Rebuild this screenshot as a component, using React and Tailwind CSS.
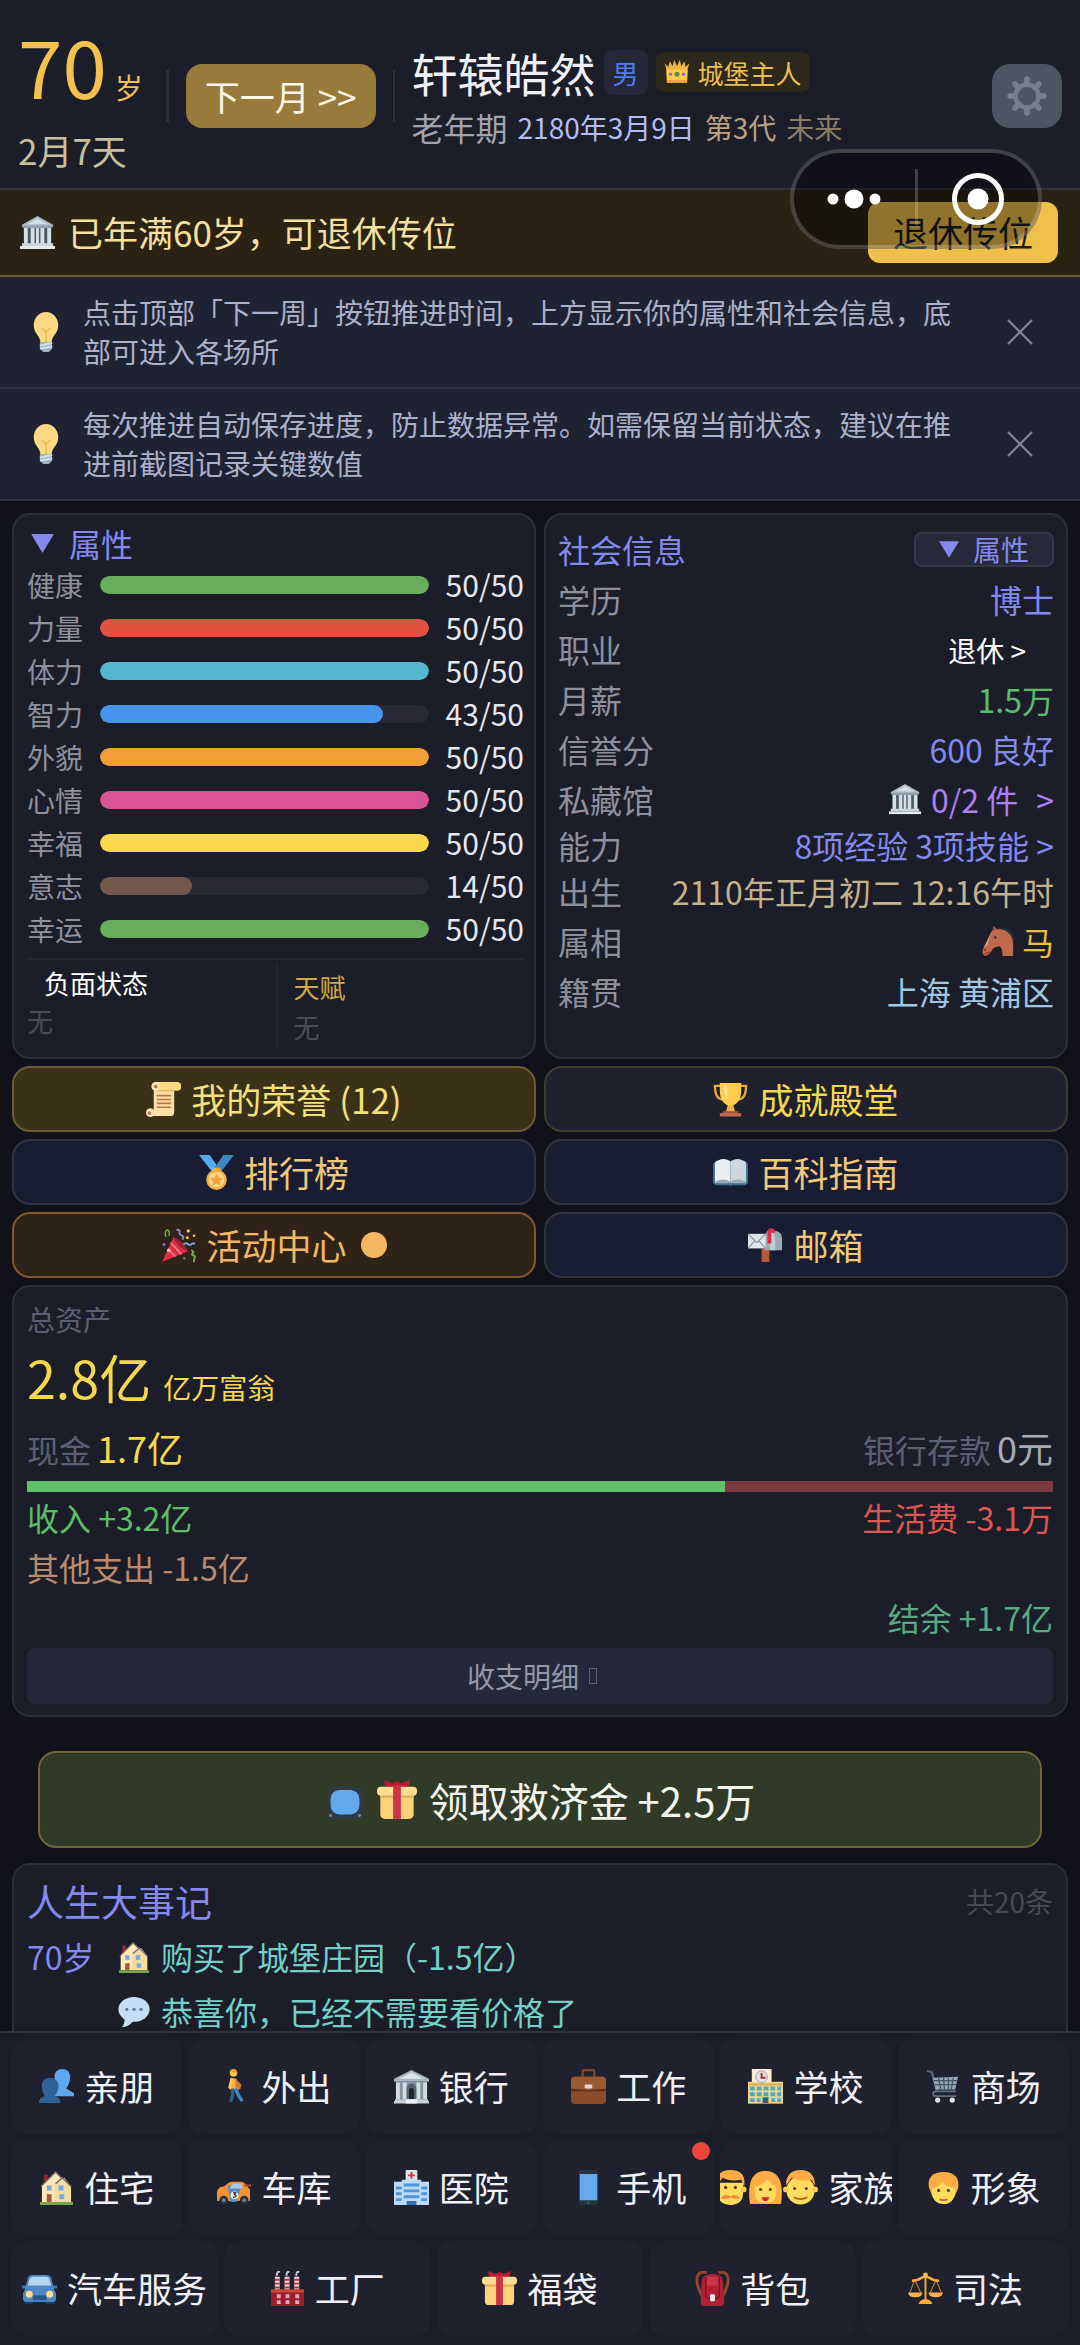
import { useState } from "react";

const icons = {
  museum: (
    <>
      <path d="M2 10 18 1l16 9v2H2z" fill="#a9b9c6" />
      <path d="M7 9.500 18 3.500l11 6z" fill="#d3dde5" />
      <path d="M4 12h28v19H4z" fill="#475866" />
      <path d="M4 12h4v18H4zM11 12h4v18h-4zM21 12h4v18h-4zM28 12h4v18h-4zM16.500 12h3v18h-3z" fill="#d5dfe6" />
      <path d="M3 11h30v2.500H3z" fill="#8fa0ae" />
      <path d="M2 29h32v3H2z" fill="#ccd6dd" />
      <path d="M0 32h36v3H0z" fill="#e4ebef" />
    </>
  ),
  bank: (
    <>
      <path d="M0 10 18 1l18 9v3H0z" fill="#a9b7c1" />
      <path d="M5 10 18 3.500 31 10z" fill="#dce4e9" />
      <path d="M2 13h32v18H2z" fill="#8495a1" />
      <path d="M2 14h4v17H2zM9 14h4v17H9zM23 14h4v17h-4zM30 14h4v17h-4z" fill="#d3dce2" />
      <path d="M13 31V20a5 5 0 0 1 10 0v11z" fill="#55646f" />
      <path d="M15.500 31V22a2.500 2.500 0 0 1 5 0v9z" fill="#1d252c" />
      <path d="M1 31h34v2H1zM0 33h36v2.500H0z" fill="#c6d1d8" />
      <path d="M12 31h12v4.500H12z" fill="#eef2f5" />
    </>
  ),
  crown: (
    <>
      <path d="M3 13 1 6l5 5 2-8 4 7 2-9 4 9 4-9 2 9 4-7 2 8 5-5-2 7-1 20H4z" fill="#f4b643" />
      <path d="M4 15h28v14H4z" fill="#ffcc4d" />
      <path d="M4 29h28v4H4z" fill="#f4a33a" />
      <circle cx="18" cy="21" r="3.500" fill="#5c913b" />
      <circle cx="9" cy="21" r="2.300" fill="#9266cc" />
      <circle cx="27" cy="21" r="2.300" fill="#9266cc" />
    </>
  ),
  bulb: (
    <>
      <path d="M29 12c0 8-6 9-6 16H13c0-7-6-8-6-16C7 5 12 0 18 0s11 5 11 12z" fill="#ffd983" />
      <path d="m14 14 4 4 4-4M18 18v9" fill="none" stroke="#f3bd56" strokeWidth="1.500" />
      <path d="M12.500 27h11v6l-3 3h-5l-3-3z" fill="#9fb2bf" />
      <path d="m12.500 30 11-2M12.500 33l11-2" stroke="#dce5eb" strokeWidth="1.500" />
    </>
  ),
  horse: (
    <>
      <path d="M16 4c10-3 20 2 20 13v9c-5-9-8-15-18-17z" fill="#292f33" />
      <path d="M12 6 13 1l4 4c11-1 18 7 18 17v13H23c0-7-1-9-3-11-4 1-7 1-9 5-3 4-6 7-9 5-2-2-2-5 0-9l6-12c1-3 2-5 4-7z" fill="#c1694f" />
      <path d="m12 6 1-5 3 5z" fill="#9a4b36" />
      <path d="M2 25 10 10l-4 13z" fill="#dd9b86" />
      <circle cx="15" cy="14" r="1.400" fill="#292f33" />
      <circle cx="3.500" cy="28" r="1" fill="#57251a" />
      <path d="m3 33 6-3" stroke="#7a3d2c" strokeWidth="1.200" />
    </>
  ),
  scroll: (
    <>
      <path d="M8 5h21v26a4 4 0 0 1-4 4H4l4-5z" fill="#ffe0a3" />
      <path d="M9 0h23a4 4 0 0 1 0 9H9z" fill="#ffd983" />
      <circle cx="10" cy="4.500" r="4.500" fill="#ffe8b6" />
      <circle cx="10" cy="4.500" r="2" fill="#c1805c" />
      <circle cx="4.500" cy="31.500" r="4.500" fill="#ffe8b6" />
      <circle cx="3.500" cy="32" r="2" fill="#c1805c" />
      <path d="M12 9h18" stroke="#d9a760" />
      <path d="M11 14h15M11 18h15M11 22h15M11 26h15" stroke="#b5744f" strokeWidth="1.600" />
    </>
  ),
  trophy: (
    <>
      <path d="M9 4H2c0 8 2 14 9 14M27 4h7c0 8-2 14-9 14" fill="none" stroke="#e5a83e" strokeWidth="2.400" />
      <path d="M7 1h22v8c0 9-4 13-8 15v5h-6v-5C11 22 7 18 7 9z" fill="#ffcc4d" />
      <path d="M11 3h4v15c-3-3-4-7-4-11z" fill="#ffe08a" />
      <path d="M15 25h6l2 6H13z" fill="#f0b340" />
      <path d="M10 30h16v3H10z" fill="#a6523c" />
      <path d="M7 32h22v3.500H7z" fill="#bd6a4f" />
    </>
  ),
  medal: (
    <>
      <path d="M0 0h11l9 13-6 5z" fill="#55acee" />
      <path d="M36 0H25l-9 13 6 5z" fill="#3b88c3" />
      <path d="M14 13h8v4h-8z" fill="#ffac33" />
      <circle cx="18" cy="25.500" r="10.500" fill="#f4ae47" />
      <circle cx="18" cy="25.500" r="8" fill="#ffd983" />
      <path d="m18 19 2 4.500 5 .5-3.700 3.300 1 4.700-4.300-2.500-4.300 2.500 1-4.700L11 24l5-.5z" fill="#f4a23b" />
    </>
  ),
  book: (
    <>
      <path d="M0 9 3 6h30l3 3v20l-3 2H20l-2 1-2-1H3l-3-2z" fill="#3f6d92" />
      <path d="M2 8c5-5 12-5 16-1v21c-5-4-11-3-16 0z" fill="#e8eef2" />
      <path d="M34 8c-5-5-12-5-16-1v21c5-4 11-3 16 0z" fill="#ccd6dd" />
      <path d="M2 28c5-3 11-4 16 0 5-4 11-3 16 0v1H2z" fill="#99aab5" />
      <path d="M18 7v21" stroke="#a7b6c0" />
    </>
  ),
  party: (
    <>
      <path d="M13 9 28 24 1 35z" fill="#dd2e44" />
      <path d="M13 9c5 2 12 8 15 15-6-1-14-8-15-15z" fill="#9e2236" />
      <path d="m7 22 8 7M10 15l11 12" stroke="#ea7180" strokeWidth="2" />
      <path d="M5 9c-3-9 6-9 3-1" fill="none" stroke="#77b255" strokeWidth="1.500" />
      <path d="M16 2c6-1 1 4 4 5s4 2 2 5" fill="none" stroke="#9d7fda" strokeWidth="2" />
      <path d="M23 17c4-4 5 2 8 0 2-2 3-1 4-1" fill="none" stroke="#7ea5e8" strokeWidth="2" />
      <path d="M31 23c6 2-2 4 2 5s0 4 1 7" fill="none" stroke="#77b255" strokeWidth="2" />
      <circle cx="28" cy="3" r="1.700" fill="#ffcc4d" />
      <circle cx="34" cy="8" r="1.300" fill="#ffcc4d" />
      <circle cx="27" cy="10" r="1.500" fill="#ffcc4d" />
      <circle cx="3" cy="17" r="1.500" fill="#8475d8" />
      <circle cx="24" cy="31" r="1.300" fill="#5c913b" />
      <circle cx="8" cy="23" r="1.800" fill="#f6c2ca" />
    </>
  ),
  mailbox: (
    <>
      <path d="M14 21h8v14h-8z" fill="#b5593b" />
      <path d="M20 3h8a7 7 0 0 1 7 7v13H17V8z" fill="#99aab5" />
      <path d="M20 3c5 0 8 3 8 8v12h-5z" fill="#c2ced6" />
      <path d="M0 6h18v15H0z" fill="#dfe6eb" />
      <path d="m0 6 9 9 9-9M0 21l7-8M18 21l-7-8" fill="none" stroke="#8596a2" strokeWidth="1.200" />
      <path d="M20 16V4c0-5 8-5 8 0v1h-4v11z" fill="#dd2e44" />
    </>
  ),
  tv: (
    <>
      <path d="m12 0 6 7 6-7" fill="none" stroke="#30373b" strokeWidth="1.600" />
      <rect x="2" y="6" width="32" height="29" rx="4" fill="#2e3942" />
      <rect x="5" y="9" width="26" height="22" rx="8" fill="#65a9ed" />
      <circle cx="5" cy="32" r="1.300" fill="#7d8d98" />
      <circle cx="31" cy="32" r="1.300" fill="#7d8d98" />
    </>
  ),
  gift: (
    <>
      <path d="M17 7C10 8 5 5 7 0l7 3 4-2 4 2 7-3c2 5-3 8-10 7z" fill="#be1931" />
      <path d="M3 13h30v18a4 4 0 0 1-4 4H7a4 4 0 0 1-4-4z" fill="#fdd279" />
      <path d="M3 13h30v3H3z" fill="#e2ac54" />
      <rect y="6" width="36" height="8" rx="3.500" fill="#ffdd91" />
      <path d="M14.500 5h7v30h-7z" fill="#cf3249" />
    </>
  ),
  house: (
    <>
      <path d="M5 5h4v10H5z" fill="#8c2b30" />
      <path d="m3 16 14-14 8 8 7 6v17H3z" fill="#ffe8b6" />
      <path d="M16 15 26 8l7 9v16H16z" fill="#f7dca0" />
      <path d="m2 17 15-15 7 7M17 14l7-6 9 9" fill="none" stroke="#77696b" strokeWidth="1.500" />
      <path d="M8 16h5v5H8zM20 16h5v5h-5zM21 25h5v5h-5z" fill="#6aafe8" />
      <path d="M8 25h5v8H8z" fill="#a4583d" />
      <path d="M1 33h34v3H1z" fill="#77a54c" />
    </>
  ),
  speech: (
    <>
      <ellipse cx="18" cy="15" rx="17.500" ry="14" fill="#c4def5" />
      <path d="M7 23c1 5 0 10-3 12 7 0 12-4 15-9z" fill="#c4def5" />
      <circle cx="10" cy="15" r="1.800" fill="#5d788f" />
      <circle cx="18" cy="15" r="1.800" fill="#5d788f" />
      <circle cx="26" cy="15" r="1.800" fill="#5d788f" />
    </>
  ),
  busts: (
    <>
      <path d="M16 8c0-5 3-8 8-8s8 3 8 8c0 6-2 9-4 12l8 5v3H15V18c-2-2 1-5 1-10z" fill="#5ea6ee" />
      <path d="M3 17c0-5 3-8 8-8s9 3 9 8c0 6-2 8-4 11 4 1 6 3 6 7H0c0-4 2-6 6-7-2-3-3-6-3-11z" fill="#2e6298" />
    </>
  ),
  walker: (
    <>
      <circle cx="18" cy="4" r="3.800" fill="#ffca4b" />
      <path d="M14 3c1-4 8-4 8 1z" fill="#f0a326" />
      <path d="m15 9 6 1 3 11h-9z" fill="#ffb14a" />
      <path d="m20 10 6 6-1 5-5-2z" fill="#d9782d" />
      <path d="m16 10-2 9 4 3" fill="none" stroke="#ffcc4d" strokeWidth="2.500" />
      <path d="M17 20v7l-2 7" fill="none" stroke="#2b608f" strokeWidth="3.500" />
      <path d="m20 20 3 7 4 6" fill="none" stroke="#4286c3" strokeWidth="3.500" />
    </>
  ),
  briefcase: (
    <>
      <path d="M12 8V3q0-2 2-2h8q2 0 2 2v5" fill="none" stroke="#7c4a2c" strokeWidth="2.500" />
      <rect y="8" width="36" height="28" rx="4" fill="#8b4c2a" />
      <path d="M0 20h36v3H0z" fill="#612d1a" />
      <path d="M0 12a4 4 0 0 1 4-4h28a4 4 0 0 1 4 4v8q-18 3-36 0z" fill="#9c5a30" />
      <rect x="14" y="16" width="8" height="4" rx="1.500" fill="#d7dde0" />
    </>
  ),
  school: (
    <>
      <path d="M4 0h20v20H4z" fill="#fbe6bc" />
      <path d="M0 13h36v22H0z" fill="#f3d688" />
      <path d="M4 0h20v13H4z" fill="#ffeed0" />
      <path d="M1 15h34v2H1z" fill="#d8ad56" />
      <path d="M2 18h5v4H2zM9 18h5v4H9zM16 18h5v4h-5zM23 18h5v4h-5zM30 18h4v4h-4zM2 24h5v4H2zM9 24h5v4H9zM16 24h5v4h-5zM23 24h5v4h-5zM30 24h4v4h-4zM2 30h5v4H2zM9 30h4v4H9zM24 30h4v4h-4zM30 30h4v4h-4z" fill="#57a8c7" />
      <path d="M15 29h6v7h-6z" fill="#286287" />
      <circle cx="14" cy="8" r="6" fill="#d9e4eb" stroke="#98a5af" />
      <path d="M14 4v5h4" fill="none" stroke="#be1931" strokeWidth="2" />
      <path d="M0 35h36v1H0z" fill="#77b255" />
    </>
  ),
  cart: (
    <>
      <path d="m1 2 5 1 5 20" fill="none" stroke="#566775" strokeWidth="2.200" />
      <path d="m7 9 26-1-3 13H10z" fill="#95a7b4" />
      <path d="M8 12h24M9 16h22M13 9l2 12M18 9l1 12M23 9v12M28 9l-2 12" stroke="#455561" strokeWidth="1.300" />
      <path d="M31 23H11c-5 0-5 5 0 5h20" fill="none" stroke="#5f717e" strokeWidth="1.800" />
      <circle cx="12" cy="32" r="2.700" fill="#dbe3e8" />
      <circle cx="27" cy="32" r="2.700" fill="#dbe3e8" />
    </>
  ),
  racecar: (
    <>
      <path d="M1 23q1-6 7-6l5-4q1-1 4-1h8q5 0 8 6l2 2v12H1z" fill="#f49232" />
      <path d="M12 16h14l-5 17h-6z" fill="#5389c5" />
      <path d="m15 17 3-3h8l2 5H14z" fill="#a6c9e9" />
      <path d="M29 15h7v2h-7z" fill="#a94e28" />
      <circle cx="8" cy="31" r="4.500" fill="#273039" />
      <circle cx="29" cy="31" r="4.500" fill="#273039" />
      <circle cx="8" cy="31" r="2" fill="#71818e" />
      <circle cx="29" cy="31" r="2" fill="#71818e" />
      <circle cx="19" cy="26" r="4" fill="#eef3f5" />
      <path d="M17.500 23.500h3l-1.500 2c3 0 2 3-1.500 2.500" fill="none" stroke="#222" strokeWidth="1.100" />
    </>
  ),
  hospital: (
    <>
      <rect x="12" width="12" height="12" rx="1" fill="#dce5eb" />
      <path d="M18 2v7M14.500 5.500h7" stroke="#dd2e44" strokeWidth="2" />
      <path d="M0 12h8v-2h20v2h8v24H0z" fill="#bcdaf3" />
      <path d="M10 14h16v3H10zM10 20h16v3H10zM10 26h16v3H10zM2 17h6v3H2zM28 17h6v3h-6zM2 23h6v3H2zM28 23h6v3h-6zM2 29h6v3H2zM28 29h6v3h-6z" fill="#4f94d4" />
      <path d="M13 32h10v4H13z" fill="#3470a5" />
    </>
  ),
  phone: (
    <>
      <rect x="8" width="20" height="36" rx="2.500" fill="#26343d" />
      <path d="M9 4h18v27H9z" fill="#64aaed" />
      <circle cx="18" cy="33.500" r="1" fill="#566b78" />
    </>
  ),
  man: (
    <>
      <path d="M5 13h26v10q0 13-13 13T5 23z" fill="#ffdc5d" />
      <circle cx="4.500" cy="20" r="3" fill="#f8cb55" />
      <circle cx="31.500" cy="20" r="3" fill="#f8cb55" />
      <path d="M4 17C2 6 7 0 18 0s16 6 14 17l-3-7c-8 2-15 0-19-2q-3 3-6 9z" fill="#ffac47" />
      <circle cx="13" cy="18" r="1.700" fill="#604027" />
      <circle cx="23" cy="18" r="1.700" fill="#604027" />
      <path d="M8 29c3-4 7-4 10-2 3-2 7-2 10 2-4 1-7 1-10-1-3 2-6 2-10 1z" fill="#ee8c37" />
    </>
  ),
  woman: (
    <>
      <path d="M2 35C-1 13 4 1 18 1s19 12 16 34z" fill="#ffac47" />
      <path d="M7 17q8-1 13-8 3 6 9 8v6q0 11-11 11T7 23z" fill="#ffdc5d" />
      <circle cx="13" cy="20" r="1.600" fill="#604027" />
      <circle cx="23" cy="20" r="1.600" fill="#604027" />
      <path d="M14 28h8q-1 4-4 4t-4-4z" fill="#df1f32" />
    </>
  ),
  boy: (
    <>
      <ellipse cx="18" cy="21" rx="14.500" ry="14.500" fill="#ffdc5d" />
      <circle cx="3" cy="20" r="3" fill="#f8cb55" />
      <circle cx="33" cy="20" r="3" fill="#f8cb55" />
      <path d="M3 16C3 5 9 0 18 0s15 5 15 16l-4-6c-8 2-15 1-20-2z" fill="#ffac47" />
      <circle cx="12" cy="19" r="1.600" fill="#604027" />
      <circle cx="24" cy="19" r="1.600" fill="#604027" />
      <path d="M11 28q7 4 14 0" fill="none" stroke="#b65a27" strokeWidth="1.800" />
    </>
  ),
  person: (
    <>
      <path d="M3 18C1 8 7 2 18 2s17 6 15 17l-4 9H7z" fill="#ffac47" />
      <path d="M6 19c5-1 9-4 11-7 3 4 7 6 13 6v4q-1 13-12 13T6 23z" fill="#ffdc5d" />
      <circle cx="13" cy="21" r="1.600" fill="#604027" />
      <circle cx="23" cy="21" r="1.600" fill="#604027" />
      <path d="M14 30q4 2 8 0" fill="none" stroke="#b65a27" strokeWidth="1.800" />
    </>
  ),
  car: (
    <>
      <path d="M0 15h5v3H0zM31 15h5v3h-5z" fill="#3b78b0" />
      <path d="M3 29h8v5H3zM25 29h8v5h-8z" fill="#213c59" />
      <path d="m3 19 3-12q1-3 5-3h14q4 0 5 3l3 12 2 4v5q0 4-4 4H5q-4 0-4-4v-5z" fill="#4d88c3" />
      <path d="m6 15 2-7q1-2 4-2h12q3 0 4 2l2 7z" fill="#b4d7f3" />
      <path d="M11 25h14v5H11z" fill="#24588c" />
      <circle cx="7.500" cy="24" r="3.600" fill="#ffe08a" />
      <circle cx="28.500" cy="24" r="3.600" fill="#ffe08a" />
    </>
  ),
  factory: (
    <>
      <path d="M5 6h5v14H5zM15 6h5v14h-5zM25 6h5v14h-5z" fill="#e8dfe2" />
      <path d="M5 8h5v2H5zM5 12h5v2H5zM5 16h5v2H5zM15 8h5v2h-5zM15 12h5v2h-5zM15 16h5v2h-5zM25 8h5v2h-5zM25 12h5v2h-5zM25 16h5v2h-5z" fill="#c32b3c" />
      <path d="M7 5q0-5 3-4M17 5q0-5 3-4M27 5q0-5 3-4" fill="none" stroke="#c8d0d6" strokeWidth="2" />
      <path d="M1 19h34v17H1z" fill="#9e1d2d" />
      <path d="M1 19h34v3H1z" fill="#c44a35" />
      <path d="M7 24h4v4H7zM16 24h4v4h-4zM26 24h4v4h-4zM7 30h4v4H7zM16 30h4v4h-4zM26 30h4v4h-4z" fill="#d9a8b6" />
    </>
  ),
  backpack: (
    <>
      <path d="M12 2C4-1 0 5 3 16l5 12M24 2c8-3 12 3 9 14l-5 12" fill="none" stroke="#8e4635" strokeWidth="3" />
      <path d="M7 12C7 5 12 3 18 3s11 2 11 9l1 20q0 4-4 4H10q-4 0-4-4z" fill="#b32035" />
      <path d="M12 6h12v9H12z" fill="#ca3548" />
      <path d="M11 6v19q0 3 3 3h8q3 0 3-3V6" fill="none" stroke="#7e1426" strokeWidth="1.500" />
      <rect x="15.500" y="24" width="5" height="7" rx="1" fill="#e7edf0" />
    </>
  ),
  scales: (
    <>
      <path d="M7 9 2 22M7 9l6 13M29 9l-6 13M29 9l5 13" stroke="#a97c4a" strokeWidth="1.200" />
      <path d="M17 2h2v30h-2z" fill="#f4a93d" />
      <path d="M4 10q6 0 10-3 4-2 8 0 4 3 10 3" fill="none" stroke="#ffac33" strokeWidth="2.500" />
      <circle cx="18" cy="4" r="2.500" fill="#ffbd4f" />
      <path d="M0 22h15q-1 5-7.500 5T0 22zM21 22h15q-1 5-7.500 5T21 22z" fill="#ffb443" />
      <path d="M11 34q1-5 7-5t7 5z" fill="#ffac33" />
    </>
  ),
};

function Icon({ name, className = "size-[35px]" }) {
  return (
    <svg viewBox="0 0 36 36" aria-hidden="true" className={`shrink-0 ${className}`}>
      {icons[name]}
    </svg>
  );
}

function Triangle({ className }) {
  return (
    <svg viewBox="0 0 24 20" aria-hidden="true" className={className} fill="currentColor">
      <path d="M0 0h24L12 20z" />
    </svg>
  );
}

const tips = [
  "点击顶部「下一周」按钮推进时间，上方显示你的属性和社会信息，底部可进入各场所",
  "每次推进自动保存进度，防止数据异常。如需保留当前状态，建议在推进前截图记录关键数值",
];

const MAX_STAT = 50;

const stats = [
  { label: "健康", value: 50, color: "bg-[#68ad5c]" },
  { label: "力量", value: 50, color: "bg-[#e2533f]" },
  { label: "体力", value: 50, color: "bg-[#54b7cf]" },
  { label: "智力", value: 43, color: "bg-[#4994ec]" },
  { label: "外貌", value: 50, color: "bg-[#f19e38]" },
  { label: "心情", value: 50, color: "bg-[#d95397]" },
  { label: "幸福", value: 50, color: "bg-[#fbd84a]" },
  { label: "意志", value: 14, color: "bg-[#75584c]" },
  { label: "幸运", value: 50, color: "bg-[#68ad5c]" },
];

const shortcuts = [
  { icon: "scroll", label: "我的荣誉 (12)", style: "bg-[#3a3118] border-[#6b5a35] text-[#f5e07c]" },
  { icon: "trophy", label: "成就殿堂", style: "bg-[#1f212e] border-[#3f3d2f] text-[#f3d94e]" },
  { icon: "medal", label: "排行榜", style: "bg-[#191d33] border-[#32343d] text-[#efc878]" },
  { icon: "book", label: "百科指南", style: "bg-[#191d33] border-[#32343d] text-[#efc878]" },
  { icon: "party", label: "活动中心", style: "bg-[#2f2318] border-[#80592f] text-[#f1b765]", dot: true },
  { icon: "mailbox", label: "邮箱", style: "bg-[#191d33] border-[#32343d] text-[#efc878]" },
];

const places = [
  { icons: ["busts"], label: "亲朋" },
  { icons: ["walker"], label: "外出" },
  { icons: ["bank"], label: "银行" },
  { icons: ["briefcase"], label: "工作" },
  { icons: ["school"], label: "学校" },
  { icons: ["cart"], label: "商场" },
  { icons: ["house"], label: "住宅" },
  { icons: ["racecar"], label: "车库" },
  { icons: ["hospital"], label: "医院" },
  { icons: ["phone"], label: "手机", unread: true },
  { icons: ["man", "woman", "boy"], label: "家族" },
  { icons: ["person"], label: "形象" },
];

const services = [
  { icons: ["car"], label: "汽车服务" },
  { icons: ["factory"], label: "工厂" },
  { icons: ["gift"], label: "福袋" },
  { icons: ["backpack"], label: "背包" },
  { icons: ["scales"], label: "司法" },
];

function Header() {
  return (
    <header className="relative flex h-[190px] shrink-0 items-center gap-[17px] border-b-2 border-[#34353d] px-[18px] pt-1">
      <div className="flex flex-col gap-7 pr-1.5">
        <div className="flex items-baseline gap-2 leading-[80px] text-[#f2c14e]">
          <span className="text-[80px]">70</span>
          <span className="text-[28px] leading-none">岁</span>
        </div>
        <div className="text-[35px] leading-9 text-[#c6c09c]">2月7天</div>
      </div>
      <div className="h-13 w-[3px] bg-[#2e303d]" />
      <button type="button" className="h-16 rounded-2xl bg-[#987a3a] px-[19px] text-[35px] whitespace-nowrap text-[#fdf6e6]">
        下一月 &gt;&gt;
      </button>
      <div className="h-13 w-[2px] bg-[#2e303d]" />
      <div className="flex flex-col gap-3 whitespace-nowrap">
        <div className="flex items-center gap-2">
          <h1 className="text-[46px] leading-[50px] text-[#f0f0f6]">轩辕皓然</h1>
          <span className="rounded-lg bg-[#262739] px-[9px] text-[26px] leading-[45px] text-[#4f7df0]">男</span>
          <span className="flex h-10 items-center gap-2 rounded-lg bg-[#2c281b] px-2 text-[26px] text-[#eabd4d]">
            <Icon name="crown" className="size-[26px]" />
            城堡主人
          </span>
        </div>
        <div className="flex items-center gap-2.5 text-[28px] leading-9">
          <span className="text-[32px] text-[#a2a3ac]">老年期</span>
          <span className="text-[#b3bdf2]">2180年3月9日</span>
          <span className="text-[#b9a184]">第3代</span>
          <span className="text-[#8b7c66]">未来</span>
        </div>
      </div>
      <button type="button" aria-label="设置" className="ml-auto flex h-16 w-[70px] items-center justify-center rounded-[18px] bg-[#4c5561]">
        <svg viewBox="0 0 40 40" className="size-10" fill="none" stroke="#74808c">
          <circle cx="20" cy="20" r="11.500" strokeWidth="4.500" />
          <path
            d="M20 3v5M20 32v5M3 20h5M32 20h5M8 8l4 4M28 28l4 4M32 8l-4 4M12 28l-4 4"
            strokeWidth="5.500"
            strokeLinecap="round"
          />
        </svg>
      </button>

      {/* mini-program capsule floats above the banner */}
      <div className="absolute top-[149px] right-[38px] z-10 flex h-[100px] w-[252px] rounded-full border-4 border-white/20 bg-black/40">
        <button type="button" aria-label="更多" className="flex flex-1 items-center justify-center">
          <svg viewBox="0 0 54 20" className="h-5 w-[54px]" fill="#fff">
            <circle cx="6" cy="10" r="5.500" />
            <circle cx="27" cy="10" r="9.500" />
            <circle cx="48" cy="10" r="5.500" />
          </svg>
        </button>
        <div className="mt-4 h-14 w-[3px] bg-white/20" />
        <button type="button" aria-label="关闭" className="flex flex-1 items-center justify-center">
          <svg viewBox="0 0 52 52" className="size-13">
            <circle cx="26" cy="26" r="23.500" fill="none" stroke="#fff" strokeWidth="5" />
            <circle cx="26" cy="26" r="10.500" fill="#fff" />
          </svg>
        </button>
      </div>
    </header>
  );
}

function Tip({ text, onClose }) {
  return (
    <div className="flex h-28 shrink-0 items-center border-b-2 border-[#2f3248] bg-[#1f2233] pr-[47px] pl-[26px]">
      <Icon name="bulb" className="size-10" />
      <p className="ml-[17px] w-[884px] text-[28px] leading-[39px] text-[#adb0cb]">{text}</p>
      <button type="button" aria-label="关闭提示" onClick={onClose} className="ml-auto text-[#85879a]">
        <svg viewBox="0 0 26 26" className="size-[26px]" stroke="currentColor" strokeWidth="2">
          <path d="m1 1 24 24M25 1 1 25" />
        </svg>
      </button>
    </div>
  );
}

function StatPanel() {
  const [open, setOpen] = useState(true);

  return (
    <section className="rounded-[18px] border-2 border-[#2b2d3b] bg-[#1b1d29] pt-2 pr-2.5 pb-2.5 pl-[13px]">
      <h2>
        <button
          type="button"
          aria-expanded={open}
          onClick={() => setOpen(!open)}
          className="flex h-10 items-center gap-[15px] pl-1 text-[32px] leading-10 text-[#8489ee]"
        >
          <Triangle className="h-[19px] w-[23px]" />
          属性
        </button>
      </h2>
      {open && stats.map((stat) => (
        <div key={stat.label} className="flex h-[43px] items-center">
          <span className="w-[73px] text-[28px] text-[#8f909c]">{stat.label}</span>
          <div className="h-[18px] flex-1 overflow-hidden rounded-full bg-[#282935]">
            <div
              className={`h-full rounded-full ${stat.color}`}
              style={{ width: `${(stat.value / MAX_STAT) * 100}%` }}
            />
          </div>
          <span className="w-[95px] text-right text-[30px] text-[#e6e7ee]">{stat.value}/{MAX_STAT}</span>
        </div>
      ))}
      <div className="mt-2 grid grid-cols-2 border-t-2 border-[#232531] pt-1 text-[26px]">
        <div className="leading-[38px]">
          <div className="pl-[17px] text-white">负面状态</div>
          <div className="text-[#4a4c57]">无</div>
        </div>
        <div className="border-l-2 border-[#232531] pt-[3px] pl-4 leading-10">
          <div className="text-[#d4a843]">天赋</div>
          <div className="text-[#4a4c57]">无</div>
        </div>
      </div>
    </section>
  );
}

function InfoRow({ label, className = "h-[50px]", children }) {
  return (
    <div className={`flex items-center justify-between ${className}`}>
      <dt className="text-[#8f909c]">{label}</dt>
      <dd>{children}</dd>
    </div>
  );
}

function SocialPanel() {
  return (
    <section className="rounded-[18px] border-2 border-[#2b2d3b] bg-[#1b1d29] px-3 pt-[9px] text-[32px] leading-[42px]">
      <div className="flex h-[50px] items-center justify-between">
        <h2 className="text-[#8489ee]">社会信息</h2>
        <button type="button" className="flex h-[35px] w-[140px] items-center justify-center gap-3.5 rounded-lg border-2 border-[#34364a] bg-[#27293a] text-[28px] text-[#8489ee]">
          <Triangle className="h-[17px] w-5" />
          属性
        </button>
      </div>
      <dl>
        <InfoRow label="学历"><span className="text-[#8489ee]">博士</span></InfoRow>
        <InfoRow label="职业">
          <button type="button" className="pr-7 text-[28px] text-white">退休 &gt;</button>
        </InfoRow>
        <InfoRow label="月薪"><span className="text-[#5cbb70]">1.5万</span></InfoRow>
        <InfoRow label="信誉分"><span className="text-[#8489ee]">600 良好</span></InfoRow>
        <InfoRow label="私藏馆">
          <button type="button" className="flex items-center gap-2.5 text-[#ac7ff2]">
            <Icon name="museum" className="size-8" />
            0/2 件
            <span className="pl-2">&gt;</span>
          </button>
        </InfoRow>
        <InfoRow label="能力" className="h-[42px]">
          <button type="button" className="text-[#8489ee]">8项经验 3项技能 &gt;</button>
        </InfoRow>
        <InfoRow label="出生"><span className="text-[#c3b38d]">2110年正月初二 12:16午时</span></InfoRow>
        <InfoRow label="属相">
          <span className="flex items-center gap-2 text-[#e9bc42]">
            <Icon name="horse" className="size-8" />
            马
          </span>
        </InfoRow>
        <InfoRow label="籍贯"><span className="text-[#9fc7e2]">上海 黄浦区</span></InfoRow>
      </dl>
    </section>
  );
}

function AssetPanel() {
  return (
    <section className="shrink-0 rounded-[18px] border-2 border-[#2b2d3b] bg-[#1b1d29] px-[13px] pt-3 pb-[11px] text-[32px]">
      <h2 className="text-[28px] leading-10 text-[#5d5f74]">总资产</h2>
      <div className="flex items-baseline gap-3 text-[#f6d84c]">
        <span className="text-[52px] leading-[76px]">2.8亿</span>
        <span className="text-[28px] leading-none">亿万富翁</span>
      </div>
      <div className="flex justify-between leading-none text-[#5d5f74]">
        <div className="flex items-baseline gap-1.5">
          现金<span className="text-[36px] leading-[64px] text-[#f6d84c]">1.7亿</span>
        </div>
        <div className="flex items-baseline gap-1.5">
          银行存款<span className="text-[36px] leading-[64px] text-[#a9aab4]">0元</span>
        </div>
      </div>
      <div className="mt-0.5 h-[11px] bg-[#7c3a40]">
        <div className="h-full w-[68%] bg-[#5fc268]" />
      </div>
      <div className="flex justify-between leading-[50px]">
        <span className="text-[#5cbf68]">收入 +3.2亿</span>
        <span className="text-[#dd5650]">生活费 -3.1万</span>
      </div>
      <div className="leading-[50px] text-[#b98a6c]">其他支出 -1.5亿</div>
      <div className="text-right leading-[50px] text-[#58aa80]">结余 +1.7亿</div>
      <button type="button" className="mt-1.5 flex h-14 w-full items-center justify-center gap-2.5 rounded-lg bg-[#25273a] pr-4 text-[28px] text-[#9597ab]">
        收支明细
        <span className="h-4 w-2 border border-[#5d5f74]" />
      </button>
    </section>
  );
}

function EventPanel() {
  return (
    <section className="shrink-0 rounded-t-[18px] border-2 border-[#2b2d3b] bg-[#1b1d29] px-[13px] pt-[9px] text-[32px] leading-[55px]">
      <div className="flex items-center justify-between">
        <h2 className="text-[37px] text-[#8489ee]">人生大事记</h2>
        <span className="text-[28px] text-[#484a56]">共20条</span>
      </div>
      <div className="flex">
        <div className="w-[91px] text-[#8489ee]">70岁</div>
        <ul className="text-[#74cfc9]">
          <li className="flex items-center gap-[11px]">
            <Icon name="house" className="size-8" />
            购买了城堡庄园（-1.5亿）
          </li>
          <li className="flex items-center gap-[11px]">
            <Icon name="speech" className="size-8" />
            恭喜你，已经不需要看价格了
          </li>
        </ul>
      </div>
    </section>
  );
}

function NavButton({ item }) {
  return (
    <button type="button" className="relative flex h-[95px] items-center justify-center gap-2.5 overflow-hidden rounded-2xl bg-[#1f212e] text-[35px] whitespace-nowrap text-[#f0f0f6]">
      <span className="flex shrink-0">
        {item.icons.map((name) => <Icon key={name} name={name} />)}
      </span>
      <span className="shrink-0">{item.label}</span>
      {item.unread && <span className="absolute top-0.5 right-1 size-[18px] rounded-full bg-[#ea463c]" />}
    </button>
  );
}

export default function App() {
  const [openTips, setOpenTips] = useState(tips);

  return (
    <div className="flex h-screen flex-col overflow-hidden bg-[#1b1d29] font-['Noto_Sans_CJK_SC',sans-serif]">
      <Header />

      <div className="flex h-[87px] shrink-0 items-center border-b-2 border-[#6b5d35] bg-[#2a2314] pr-[22px] pl-5">
        <Icon name="museum" />
        <p className="ml-[13px] text-[35px] text-[#f5df9f]">已年满60岁，可退休传位</p>
        <button type="button" className="ml-auto h-[61px] rounded-xl bg-[#f0c14a] px-[25px] text-[35px] text-[#1b1d22]">
          退休传位
        </button>
      </div>

      {openTips.map((tip) => (
        <Tip key={tip} text={tip} onClose={() => setOpenTips(openTips.filter((t) => t !== tip))} />
      ))}

      <main className="flex min-h-0 flex-1 flex-col gap-[7px] overflow-y-auto bg-[#111219] px-3 pt-3 [scrollbar-width:none]">
        <div className="grid shrink-0 grid-cols-2 gap-2">
          <StatPanel />
          <SocialPanel />
        </div>

        <div className="grid shrink-0 grid-cols-2 gap-x-2 gap-y-[7px]">
          {shortcuts.map((item) => (
            <button
              key={item.label}
              type="button"
              className={`flex h-[66px] items-center justify-center gap-2.5 rounded-[18px] border-2 text-[35px] ${item.style}`}
            >
              <Icon name={item.icon} />
              {item.label}
              {item.dot && <span className="ml-1 size-[26px] rounded-full bg-[#f3b762]" />}
            </button>
          ))}
        </div>

        <AssetPanel />

        <button type="button" className="mx-[26px] mt-[27px] mb-2 flex h-[97px] shrink-0 items-center justify-center gap-3 rounded-[18px] border-2 border-[#70663a] bg-[#303a27] text-[40px] text-[#f3f4ee]">
          <Icon name="tv" className="size-10" />
          <Icon name="gift" className="size-10" />
          领取救济金 +2.5万
        </button>

        <EventPanel />
      </main>

      <nav className="flex shrink-0 flex-col gap-1.5 border-t-2 border-[#2f313f] px-[11px] pt-1.5 pb-[9px]">
        <div className="grid grid-cols-6 gap-1.5">
          {places.map((item) => <NavButton key={item.label} item={item} />)}
        </div>
        <div className="grid grid-cols-5 gap-1.5">
          {services.map((item) => <NavButton key={item.label} item={item} />)}
        </div>
      </nav>
    </div>
  );
}
